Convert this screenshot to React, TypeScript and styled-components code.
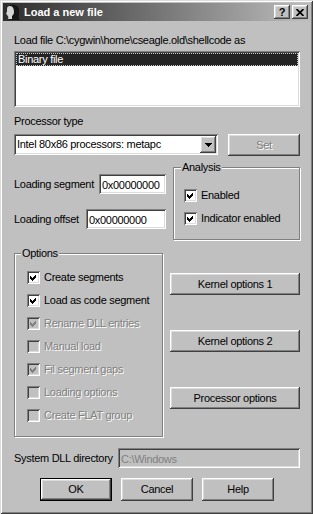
import React from "react";
import styled, { createGlobalStyle, css } from "styled-components";

const FACE = "#c0c0c0";

const GlobalStyle = createGlobalStyle`
  html, body {
    margin: 0;
    padding: 0;
    background: ${FACE};
  }
`;

const raised = css`
  box-shadow: inset -1px -1px #404040, inset 1px 1px #ffffff,
    inset -2px -2px #808080, inset 2px 2px #dcdcdc;
`;

const sunken = css`
  box-shadow: inset 1px 1px #808080, inset -1px -1px #ffffff,
    inset 2px 2px #404040, inset -2px -2px #dcdcdc;
`;

const Window = styled.div`
  width: 313px;
  height: 514px;
  box-sizing: border-box;
  padding: 3px;
  background: ${FACE};
  box-shadow: inset 1px 1px #dcdcdc, inset -1px -1px #404040,
    inset 2px 2px #ffffff, inset -2px -2px #808080;
  display: flex;
  flex-direction: column;
  color: #000;
  font: 11px/13px "Liberation Sans", Arial, sans-serif;
  letter-spacing: -0.3px;
`;

const TitleBar = styled.div`
  height: 18px;
  display: flex;
  align-items: center;
  padding: 0 2px;
  background: linear-gradient(to right, #2c2c2c, #bdbdbd);
  color: #fff;
`;

const TitleText = styled.span`
  margin-left: 3px;
  font-weight: bold;
  font-size: 11px;
  letter-spacing: 0;
`;

const CaptionButtons = styled.div`
  margin-left: auto;
  display: flex;
  gap: 2px;
`;

const CaptionButton = styled.div`
  width: 16px;
  height: 14px;
  box-sizing: border-box;
  background: ${FACE};
  ${raised};
  display: flex;
  align-items: center;
  justify-content: center;
  color: #000;
  font-weight: bold;
  font-size: 11px;
  letter-spacing: 0;
`;

const Content = styled.div`
  display: flex;
  flex-direction: column;
  padding: 0 10px 0 11px;
`;

const Text = styled.div<{ $top?: number }>`
  margin-top: ${(p) => p.$top ?? 0}px;
  height: 13px;
  white-space: nowrap;
`;

const ListBox = styled.div`
  margin-top: 4px;
  height: 56px;
  box-sizing: border-box;
  padding: 2px;
  background: #fff;
  ${sunken};
`;

const ListItem = styled.div<{ $selected?: boolean }>`
  height: 13px;
  padding-left: 2px;
  background: ${(p) => (p.$selected ? "#242424" : "transparent")};
  color: ${(p) => (p.$selected ? "#fff" : "#000")};
  outline: ${(p) => (p.$selected ? "1px dotted #c8c8c8" : "none")};
  outline-offset: -1px;
`;

const Row = styled.div<{ $top: number }>`
  margin-top: ${(p) => p.$top}px;
  display: flex;
  align-items: flex-start;
`;

const ComboBox = styled.div`
  flex: 0 0 204px;
  height: 21px;
  box-sizing: border-box;
  padding: 2px;
  display: flex;
  align-items: center;
  background: #fff;
  ${sunken};
`;

const ComboText = styled.span`
  flex: 1;
  padding-left: 1px;
  white-space: nowrap;
`;

const ComboArrow = styled.div`
  width: 16px;
  height: 17px;
  box-sizing: border-box;
  background: ${FACE};
  ${raised};
  display: flex;
  align-items: center;
  justify-content: center;
`;

const Button = styled.div<{ $width?: number; $height?: number; $disabled?: boolean; $default?: boolean }>`
  width: ${(p) => (p.$width ? `${p.$width}px` : "auto")};
  height: ${(p) => p.$height ?? 22}px;
  box-sizing: border-box;
  background: ${FACE};
  ${raised};
  display: flex;
  align-items: center;
  justify-content: center;
  color: ${(p) => (p.$disabled ? "#808080" : "#000")};
  text-shadow: ${(p) => (p.$disabled ? "1px 1px 0 #fff" : "none")};
  white-space: nowrap;
  ${(p) =>
    p.$default &&
    css`
      border: 1px solid #000;
    `}
`;

const GroupBox = styled.div<{ $width: number; $height: number; $padTop: number; $padLeft: number; $gap: number }>`
  position: relative;
  width: ${(p) => p.$width}px;
  height: ${(p) => p.$height}px;
  box-sizing: border-box;
  border: 1px solid #808080;
  box-shadow: inset 1px 1px #fff, 1px 1px #fff;
  padding: ${(p) => p.$padTop}px 0 0 ${(p) => p.$padLeft}px;
  display: flex;
  flex-direction: column;
  gap: ${(p) => p.$gap}px;
`;

const GroupCaption = styled.span<{ $left: number }>`
  position: absolute;
  top: -7px;
  left: ${(p) => p.$left}px;
  padding: 0 1px;
  background: ${FACE};
  line-height: 13px;
`;

const CheckRow = styled.div`
  display: flex;
  align-items: center;
  height: 13px;
  gap: 4px;
  white-space: nowrap;
`;

const CheckBox = styled.span<{ $disabled?: boolean }>`
  flex: 0 0 13px;
  width: 13px;
  height: 13px;
  box-sizing: border-box;
  padding: 2px;
  background: ${(p) => (p.$disabled ? FACE : "#fff")};
  ${sunken};
  display: flex;
`;

const CheckLabel = styled.span<{ $disabled?: boolean }>`
  color: ${(p) => (p.$disabled ? "#808080" : "#000")};
  text-shadow: ${(p) => (p.$disabled ? "1px 1px 0 #fff" : "none")};
`;

const FieldColumn = styled.div`
  width: 152px;
  padding-top: 7px;
  display: flex;
  flex-direction: column;
  gap: 15px;
`;

const FieldRow = styled.div`
  display: flex;
  align-items: center;
  justify-content: space-between;
  white-space: nowrap;
`;

const TextField = styled.div<{ $width: number; $disabled?: boolean }>`
  width: ${(p) => p.$width}px;
  height: 20px;
  box-sizing: border-box;
  padding: 2px 3px 0;
  display: flex;
  align-items: center;
  background: ${(p) => (p.$disabled ? FACE : "#fff")};
  color: ${(p) => (p.$disabled ? "#808080" : "#000")};
  ${sunken};
  white-space: nowrap;
  overflow: hidden;
`;

const SideButtons = styled.div`
  flex: 1;
  margin-left: 7px;
  padding-top: 20px;
  display: flex;
  flex-direction: column;
  gap: 35px;
`;

const DialogButtons = styled.div`
  margin-top: 10px;
  display: flex;
  justify-content: center;
  gap: 9px;
`;

const Check = ({ disabled }: { disabled?: boolean }) => (
  <svg width="9" height="9" viewBox="0 0 9 9" shapeRendering="crispEdges">
    <path d="M1 3 L3 5 L7 1 L7 4 L3 8 L1 6 Z" fill={disabled ? "#808080" : "#000"} />
  </svg>
);

const Option = ({ label, checked, disabled }: { label: string; checked?: boolean; disabled?: boolean }) => (
  <CheckRow>
    <CheckBox $disabled={disabled}>{checked && <Check disabled={disabled} />}</CheckBox>
    <CheckLabel $disabled={disabled}>{label}</CheckLabel>
  </CheckRow>
);

const AppIcon = () => (
  <svg width="16" height="16" viewBox="0 0 16 16">
    <path d="M5 1 C10 0 15 2 14 8 C14 11 13 14 15 16 L4 16 C5 13 5 11 5 9 Z" fill="#151515" />
    <path
      d="M5 2 C8 2 9 5 9 8 C9 10 8 11 7 12 L7 15 L3 15 C4 13 3 12 2 11 L1 9 L2 8 L2 5 C2 3 3 2 5 2 Z"
      fill="#d6d6d6"
    />
  </svg>
);

export default function App() {
  return (
    <>
      <GlobalStyle />
      <Window>
        <TitleBar>
          <AppIcon />
          <TitleText>Load a new file</TitleText>
          <CaptionButtons>
            <CaptionButton>?</CaptionButton>
            <CaptionButton>
              <svg width="8" height="7" viewBox="0 0 8 7">
                <path d="M0.5 0 L7.5 7 M7.5 0 L0.5 7" stroke="#000" strokeWidth="1.7" />
              </svg>
            </CaptionButton>
          </CaptionButtons>
        </TitleBar>

        <Content>
          <Text $top={13}>Load file C:\cygwin\home\cseagle.old\shellcode as</Text>
          <ListBox>
            <ListItem $selected>Binary file</ListItem>
          </ListBox>

          <Text $top={8}>Processor type</Text>
          <Row $top={6}>
            <ComboBox>
              <ComboText>Intel 80x86 processors: metapc</ComboText>
              <ComboArrow>
                <svg width="7" height="4" viewBox="0 0 7 4" shapeRendering="crispEdges">
                  <path d="M0 0 H7 L3.5 4 Z" fill="#000" />
                </svg>
              </ComboArrow>
            </ComboBox>
            <Button $width={72} $disabled style={{ marginLeft: "auto" }}>
              Set
            </Button>
          </Row>

          <Row $top={11}>
            <FieldColumn>
              <FieldRow>
                Loading segment
                <TextField $width={67}>0x00000000</TextField>
              </FieldRow>
              <FieldRow>
                Loading offset
                <TextField $width={80}>0x00000000</TextField>
              </FieldRow>
            </FieldColumn>
            <GroupBox $width={127} $height={73} $padTop={21} $padLeft={10} $gap={10} style={{ marginLeft: "auto" }}>
              <GroupCaption $left={7}>Analysis</GroupCaption>
              <Option label="Enabled" checked />
              <Option label="Indicator enabled" checked />
            </GroupBox>
          </Row>

          <Row $top={13}>
            <GroupBox $width={149} $height={184} $padTop={17} $padLeft={12} $gap={10}>
              <GroupCaption $left={6}>Options</GroupCaption>
              <Option label="Create segments" checked />
              <Option label="Load as code segment" checked />
              <Option label="Rename DLL entries" checked disabled />
              <Option label="Manual load" disabled />
              <Option label="Fil segment gaps" checked disabled />
              <Option label="Loading options" disabled />
              <Option label="Create FLAT group" disabled />
            </GroupBox>
            <SideButtons>
              <Button>Kernel options 1</Button>
              <Button>Kernel options 2</Button>
              <Button>Processor options</Button>
            </SideButtons>
          </Row>

          <Row $top={11}>
            <FieldRow style={{ width: "100%" }}>
              System DLL directory
              <TextField $width={182} $disabled>
                C:\Windows
              </TextField>
            </FieldRow>
          </Row>

          <DialogButtons>
            <Button $width={72} $height={23} $default>
              OK
            </Button>
            <Button $width={72} $height={23}>
              Cancel
            </Button>
            <Button $width={72} $height={23}>
              Help
            </Button>
          </DialogButtons>
        </Content>
      </Window>
    </>
  );
}
